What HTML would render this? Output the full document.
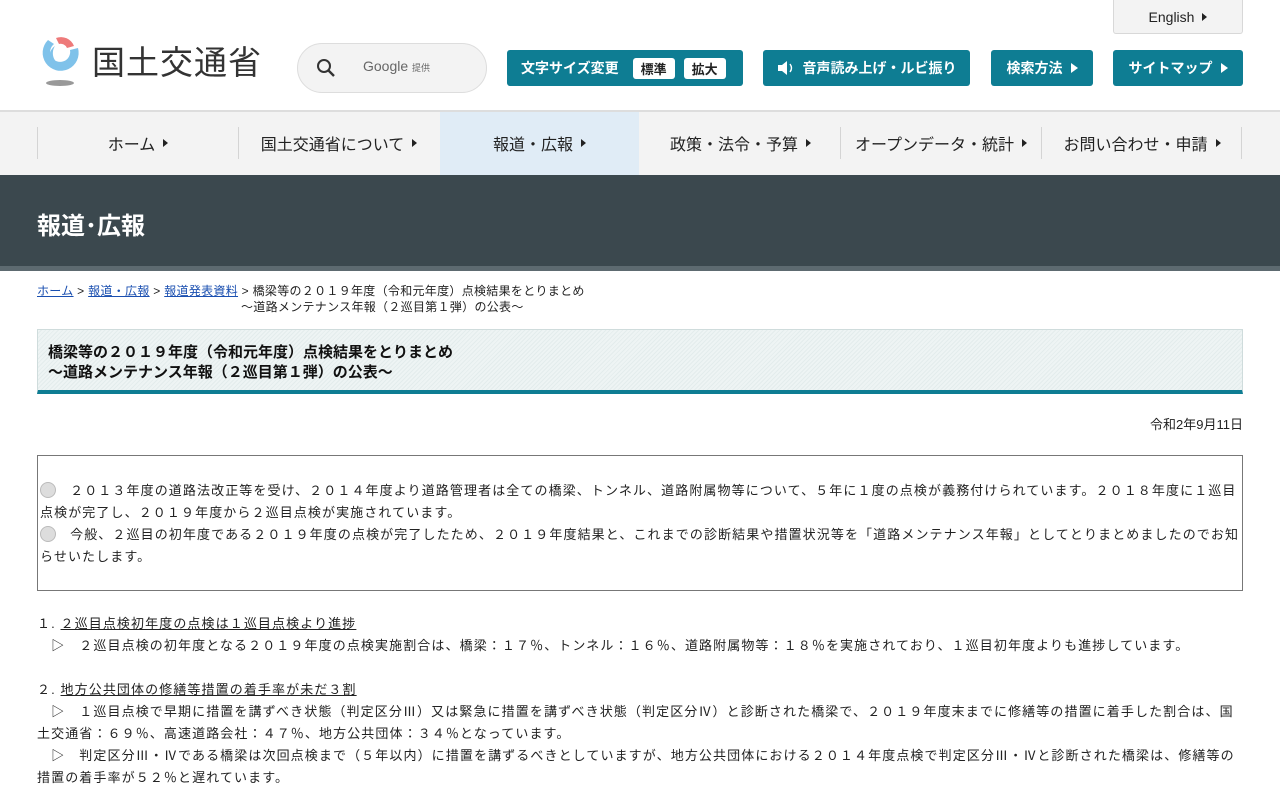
<!DOCTYPE html>
<html><head><meta charset="utf-8">
<style>
*{margin:0;padding:0;box-sizing:border-box}
body{width:1280px;height:800px;overflow:hidden;background:#fff;font-family:"Liberation Sans","Noto Sans CJK JP",sans-serif;color:#222}
.abs{position:absolute}
.btn{position:absolute;top:50px;height:36px;background:#0e7d93;color:#fff;border-radius:3px;font-size:14px;font-weight:bold;display:flex;align-items:center;justify-content:center}
.tri{display:inline-block;width:0;height:0;border-left:7px solid currentColor;border-top:5px solid transparent;border-bottom:5px solid transparent;margin-left:8px}
.nav{position:absolute;top:112px;left:0;width:1280px;height:63px;background:#f3f3f3}
.nav div{position:absolute;top:15px;height:32px;border-left:1px solid #d4d4d4;font-size:16px;display:flex;align-items:center;justify-content:center;color:#222}
.nav .st{border-left:5px solid #222;border-top:4px solid transparent;border-bottom:4px solid transparent;margin-left:8px}
p.t{font-size:13px;line-height:22px;letter-spacing:1.1px}
a{color:#1a4fb0}
</style></head><body>
<div class="abs" style="left:1113px;top:0;width:130px;height:34px;background:#f3f3f3;border:1px solid #d8d8d8;border-top:none;border-radius:0 0 3px 3px;font-size:14px;display:flex;align-items:center;justify-content:center">English<span class="tri" style="border-left-width:5px;border-top-width:4px;border-bottom-width:4px"></span></div>
<svg class="abs" style="left:34px;top:32px" width="50" height="56" viewBox="0 0 50 56">
<ellipse cx="26" cy="51" rx="14" ry="3" fill="#999"/>
<path d="M14 8 A18 18 0 1 0 44 16 L36 18 A10 10 0 1 1 20 12 Z" fill="#7fc2ea"/>
<path d="M22 6 A14 14 0 0 1 40 14 L33 16 A7 7 0 0 0 25 12 Z" fill="#ee7a7a"/>
<path d="M21 14 A11 11 0 0 0 34 34 A13 13 0 0 1 21 14 Z" fill="#7fc2ea"/>
</svg>
<div class="abs" style="left:92px;top:36px;font-size:33px;letter-spacing:1px;color:#333">国土交通省</div>
<div class="abs" style="left:297px;top:43px;width:190px;height:50px;border:1px solid #ddd;border-radius:25px;background:#f3f3f3"></div>
<svg class="abs" style="left:316px;top:58px" width="20" height="20"><circle cx="8" cy="8" r="6" fill="none" stroke="#333" stroke-width="2"/><line x1="12.5" y1="12.5" x2="18" y2="18" stroke="#333" stroke-width="2.4"/></svg>
<div class="abs" style="left:363px;top:58px;font-size:14px;color:#666">Google <span style="font-size:9px">提供</span></div>
<div class="btn" style="left:507px;width:236px;justify-content:flex-start;padding-left:14px">文字サイズ変更
<span style="background:#fff;color:#222;border-radius:3px;padding:1px 8px;margin-left:14px;font-size:13px">標準</span>
<span style="background:#fff;color:#222;border-radius:3px;padding:1px 8px;margin-left:9px;font-size:13px">拡大</span></div>
<div class="btn" style="left:763px;width:207px"><svg width="18" height="16" style="margin-right:8px"><path d="M1 5h4l5-4v14l-5-4H1z" fill="#fff"/><path d="M13 4q3 4 0 8" stroke="#fff" fill="none" stroke-width="1.4"/></svg>音声読み上げ・ルビ振り</div>
<div class="btn" style="left:991px;width:102px">検索方法<span class="tri"></span></div>
<div class="btn" style="left:1113px;width:130px">サイトマップ<span class="tri"></span></div>
<div class="abs" style="left:0;top:110px;width:1280px;height:2px;background:#ddd"></div>
<div class="nav">
<div style="left:440px;top:0;height:63px;width:199px;background:#e0ecf6;border:none"></div>
<div style="left:37px;width:201px">ホーム<span class="st"></span></div>
<div style="left:238px;width:201px">国土交通省について<span class="st"></span></div>
<div style="left:439px;width:201px;border-left:none">報道・広報<span class="st"></span></div>
<div style="left:640px;width:201px;border-left:none">政策・法令・予算<span class="st"></span></div>
<div style="left:840px;width:201px">オープンデータ・統計<span class="st"></span></div>
<div style="left:1041px;width:201px">お問い合わせ・申請<span class="st"></span></div>
<div style="left:1241px;width:1px"></div>
</div>
<div class="abs" style="left:0;top:175px;width:1280px;height:91px;background:#3b484e"></div>
<div class="abs" style="left:0;top:266px;width:1280px;height:5px;background:#5d6a70"></div>
<div class="abs" style="left:37px;top:206px;color:#fff;font-size:24px;font-weight:bold">報道･広報</div>
<div class="abs" style="left:37px;top:283px;font-size:12px;line-height:16px;color:#222;letter-spacing:0.3px"><a href="#">ホーム</a> &gt; <a href="#">報道・広報</a> &gt; <a href="#">報道発表資料</a> &gt; 橋梁等の２０１９年度（令和元年度）点検結果をとりまとめ<br><span style="padding-left:204px">～道路メンテナンス年報（２巡目第１弾）の公表～</span></div>
<div class="abs" style="left:37px;top:329px;width:1206px;height:65px;border:1px solid #cfdcdc;border-bottom:4px solid #0e7d93;background:repeating-linear-gradient(135deg,#eef4f4 0 2px,#e3ecec 2px 3px);padding:13px 10px;font-size:15px;font-weight:bold;line-height:20px;color:#111">橋梁等の２０１９年度（令和元年度）点検結果をとりまとめ<br>～道路メンテナンス年報（２巡目第１弾）の公表～</div>
<div class="abs" style="left:1100px;top:414px;width:143px;text-align:right;font-size:13px">令和2年9月11日</div>
<div class="abs" style="left:37px;top:455px;width:1206px;height:136px;border:1px solid #777;padding:24px 0 0 2px">
<p class="t"><span style="display:inline-block;width:16px;height:16px;border-radius:50%;background:#ddd;border:1px solid #bbb;vertical-align:-3px"></span>　２０１３年度の道路法改正等を受け、２０１４年度より道路管理者は全ての橋梁、トンネル、道路附属物等について、５年に１度の点検が義務付けられています。２０１８年度に１巡目点検が完了し、２０１９年度から２巡目点検が実施されています。<br><span style="display:inline-block;width:16px;height:16px;border-radius:50%;background:#ddd;border:1px solid #bbb;vertical-align:-3px"></span>　今般、２巡目の初年度である２０１９年度の点検が完了したため、２０１９年度結果と、これまでの診断結果や措置状況等を「道路メンテナンス年報」としてとりまとめましたのでお知らせいたします。</p>
</div>
<div class="abs" style="left:37px;top:613px;width:1206px">
<p class="t">１. <u>２巡目点検初年度の点検は１巡目点検より進捗</u><br>　▷　２巡目点検の初年度となる２０１９年度の点検実施割合は、橋梁：１７％、トンネル：１６％、道路附属物等：１８％を実施されており、１巡目初年度よりも進捗しています。<br><br>２. <u>地方公共団体の修繕等措置の着手率が未だ３割</u><br>　▷　１巡目点検で早期に措置を講ずべき状態（判定区分Ⅲ）又は緊急に措置を講ずべき状態（判定区分Ⅳ）と診断された橋梁で、２０１９年度末までに修繕等の措置に着手した割合は、国土交通省：６９％、高速道路会社：４７％、地方公共団体：３４％となっています。<br>　▷　判定区分Ⅲ・Ⅳである橋梁は次回点検まで（５年以内）に措置を講ずるべきとしていますが、地方公共団体における２０１４年度点検で判定区分Ⅲ・Ⅳと診断された橋梁は、修繕等の措置の着手率が５２％と遅れています。</p>
</div>
</body></html>
